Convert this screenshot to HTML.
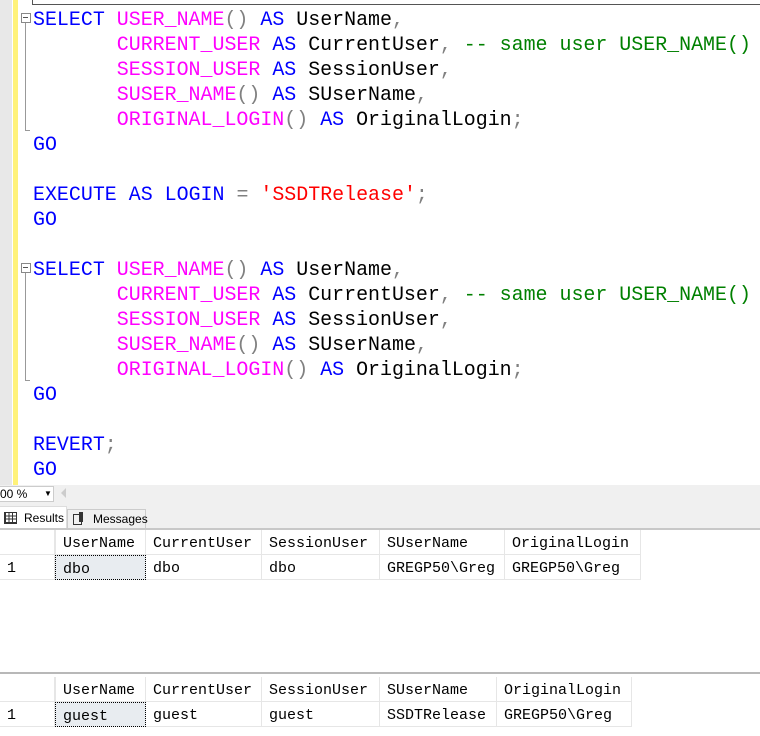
<!DOCTYPE html>
<html><head><style>
body{margin:0;width:760px;height:736px;overflow:hidden;background:#fff;position:relative;font-family:"Liberation Mono",monospace}
.a{position:absolute}
.code{position:absolute;left:33px;top:7px;font-size:19.95px;line-height:25px;white-space:pre;color:#000}
.k{color:#0000ff}.f{color:#ff00ff}.g{color:#808080}.c{color:#008000}.s{color:#ff0000}
.grid{position:absolute;left:0;font-size:15px;font-family:"Liberation Mono",monospace}
.cell{position:absolute;height:25px;line-height:27px;border-right:1px solid #e6e6e6;border-bottom:1px solid #e6e6e6;padding-left:7px;box-sizing:border-box;white-space:nowrap}
</style></head><body>
<div class="a" style="left:0;top:0;width:12px;height:485px;background:#e8e8e8"></div>
<div class="a" style="left:13px;top:0;width:5px;height:485px;background:#fff27a"></div>
<div class="a" style="left:32px;top:4px;width:728px;height:1px;background:#555"></div>
<div class="a" style="left:32px;top:0;width:1px;height:5px;background:#555"></div>
<div class="a" style="left:21px;top:13px;width:8px;height:8px;border:1px solid #888;background:#fff"></div>
<div class="a" style="left:23px;top:17px;width:5px;height:1px;background:#555"></div>
<div class="a" style="left:25px;top:23px;width:1px;height:108px;background:#999"></div>
<div class="a" style="left:25px;top:130px;width:5px;height:1px;background:#999"></div>
<div class="a" style="left:21px;top:263px;width:8px;height:8px;border:1px solid #888;background:#fff"></div>
<div class="a" style="left:23px;top:267px;width:5px;height:1px;background:#555"></div>
<div class="a" style="left:25px;top:273px;width:1px;height:108px;background:#999"></div>
<div class="a" style="left:25px;top:380px;width:5px;height:1px;background:#999"></div>
<div class="code"><span class="k">SELECT</span> <span class="f">USER_NAME</span><span class="g">()</span> <span class="k">AS</span> UserName<span class="g">,</span>
       <span class="f">CURRENT_USER</span> <span class="k">AS</span> CurrentUser<span class="g">,</span> <span class="c">-- same user USER_NAME()</span>
       <span class="f">SESSION_USER</span> <span class="k">AS</span> SessionUser<span class="g">,</span>
       <span class="f">SUSER_NAME</span><span class="g">()</span> <span class="k">AS</span> SUserName<span class="g">,</span>
       <span class="f">ORIGINAL_LOGIN</span><span class="g">()</span> <span class="k">AS</span> OriginalLogin<span class="g">;</span>
<span class="k">GO</span>

<span class="k">EXECUTE</span> <span class="k">AS</span> <span class="k">LOGIN</span> <span class="g">=</span> <span class="s">'SSDTRelease'</span><span class="g">;</span>
<span class="k">GO</span>

<span class="k">SELECT</span> <span class="f">USER_NAME</span><span class="g">()</span> <span class="k">AS</span> UserName<span class="g">,</span>
       <span class="f">CURRENT_USER</span> <span class="k">AS</span> CurrentUser<span class="g">,</span> <span class="c">-- same user USER_NAME()</span>
       <span class="f">SESSION_USER</span> <span class="k">AS</span> SessionUser<span class="g">,</span>
       <span class="f">SUSER_NAME</span><span class="g">()</span> <span class="k">AS</span> SUserName<span class="g">,</span>
       <span class="f">ORIGINAL_LOGIN</span><span class="g">()</span> <span class="k">AS</span> OriginalLogin<span class="g">;</span>
<span class="k">GO</span>

<span class="k">REVERT</span><span class="g">;</span>
<span class="k">GO</span></div>
<div class="a" style="left:0;top:485px;width:760px;height:43px;background:#f0f0f0"></div>
<div class="a" style="left:0;top:486px;width:53px;height:14px;background:#fff;border:1px solid #ccc;border-left:none;font:12px 'Liberation Sans',sans-serif;line-height:14px">00 %<span style="position:absolute;left:44px;top:0;font-size:8px">▼</span></div>
<div class="a" style="left:61px;top:488px;width:0;height:0;border-top:5px solid transparent;border-bottom:5px solid transparent;border-right:5px solid #ccc"></div>
<div class="a" style="left:0;top:506px;width:66px;height:23px;background:#fff;border:1px solid #ddd;border-left:none;border-bottom:none;font:12px 'Liberation Sans',sans-serif;line-height:22px"><span style="position:absolute;left:4px;top:5px;width:11px;height:10px;border:1px solid #333;background:repeating-linear-gradient(0deg,#333 0 1px,transparent 1px 3.3px),repeating-linear-gradient(90deg,#333 0 1px,transparent 1px 3.6px)"></span><span style="position:absolute;left:24px">Results</span></div>
<div class="a" style="left:67px;top:509px;width:77px;height:19px;border:1px solid #ccc;border-bottom:none;font:12px 'Liberation Sans',sans-serif;line-height:19px"><span style="position:absolute;left:5px;top:4px;width:7px;height:9px;border:1px solid #333"></span><span style="position:absolute;left:11px;top:2px;width:4px;height:10px;background:#333"></span><span style="position:absolute;left:25px">Messages</span></div>
<div class="a" style="left:0;top:528px;width:760px;height:2px;background:#c8c8c8"></div>
<div class="grid" style="top:530px">
<div class="cell" style="left:0;top:0;width:55px"></div>
<div class="cell" style="left:55px;top:0;width:91px;border-left:1px solid #e6e6e6">UserName</div>
<div class="cell" style="left:146px;top:0;width:116px">CurrentUser</div>
<div class="cell" style="left:262px;top:0;width:118px">SessionUser</div>
<div class="cell" style="left:380px;top:0;width:125px">SUserName</div>
<div class="cell" style="left:505px;top:0;width:136px">OriginalLogin</div>
<div class="cell" style="left:0;top:25px;width:55px">1</div>
<div class="cell" style="left:55px;top:25px;width:91px;background:#e8ecf0;border:1px dotted #000">dbo</div>
<div class="cell" style="left:146px;top:25px;width:116px">dbo</div>
<div class="cell" style="left:262px;top:25px;width:118px">dbo</div>
<div class="cell" style="left:380px;top:25px;width:125px">GREGP50\Greg</div>
<div class="cell" style="left:505px;top:25px;width:136px">GREGP50\Greg</div>
</div>
<div class="a" style="left:0;top:672px;width:760px;height:2px;background:#b8b8b8"></div>
<div class="grid" style="top:677px">
<div class="cell" style="left:0;top:0;width:55px"></div>
<div class="cell" style="left:55px;top:0;width:91px;border-left:1px solid #e6e6e6">UserName</div>
<div class="cell" style="left:146px;top:0;width:116px">CurrentUser</div>
<div class="cell" style="left:262px;top:0;width:118px">SessionUser</div>
<div class="cell" style="left:380px;top:0;width:117px">SUserName</div>
<div class="cell" style="left:497px;top:0;width:135px">OriginalLogin</div>
<div class="cell" style="left:0;top:25px;width:55px">1</div>
<div class="cell" style="left:55px;top:25px;width:91px;background:#e8ecf0;border:1px dotted #000">guest</div>
<div class="cell" style="left:146px;top:25px;width:116px">guest</div>
<div class="cell" style="left:262px;top:25px;width:118px">guest</div>
<div class="cell" style="left:380px;top:25px;width:117px">SSDTRelease</div>
<div class="cell" style="left:497px;top:25px;width:135px">GREGP50\Greg</div>
</div>
</body></html>
